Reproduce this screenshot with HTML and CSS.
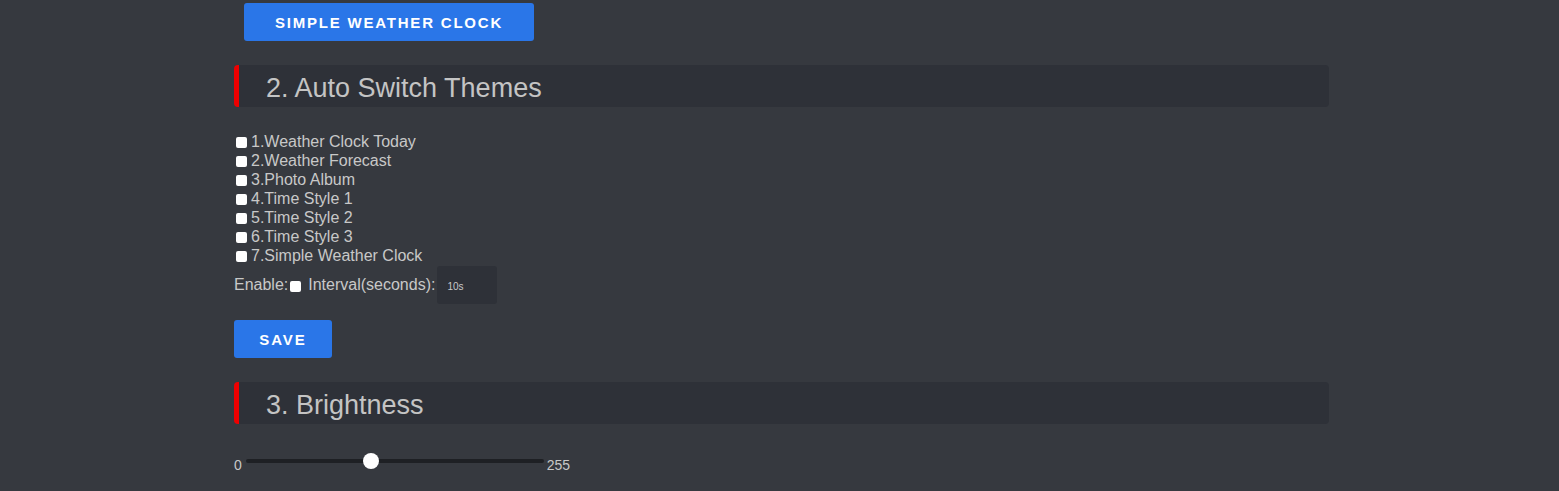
FILE: index.html
```html
<!DOCTYPE html>
<html>
<head>
<meta charset="utf-8">
<link rel="stylesheet" href="styles.css">
</head>
<body>
<div class="page">
  <div class="theme-btn-row">
    <button class="btn btn-wide">Simple Weather Clock</button>
  </div>

  <h2 class="section-title">2. Auto Switch Themes</h2>

  <div class="theme-list">
    <label class="item"><input type="checkbox" class="cb">1.Weather Clock Today</label>
    <label class="item"><input type="checkbox" class="cb">2.Weather Forecast</label>
    <label class="item"><input type="checkbox" class="cb">3.Photo Album</label>
    <label class="item"><input type="checkbox" class="cb">4.Time Style 1</label>
    <label class="item"><input type="checkbox" class="cb">5.Time Style 2</label>
    <label class="item"><input type="checkbox" class="cb">6.Time Style 3</label>
    <label class="item"><input type="checkbox" class="cb">7.Simple Weather Clock</label>
  </div>

  <div class="enable-row">
    <span>Enable:</span><input type="checkbox" class="cb cb-enable"><span class="interval-label">Interval(seconds):</span><input type="text" class="interval" placeholder="10s">
  </div>

  <button class="btn btn-save">Save</button>

  <h2 class="section-title">3. Brightness</h2>

  <div class="slider-row">
    <span class="lim">0</span>
    <div class="track"><div class="thumb" style="left: 117px"></div></div>
    <span class="lim">255</span>
  </div>
</div>
</body>
</html>
```

FILE: styles.css
```css
html, body {
  margin: 0;
  padding: 0;
  background: #36393f;
  height: 100%;
}
body {
  font-family: "Liberation Sans", Arial, sans-serif;
  color: #c8c8c8;
}
.page {
  width: 1095px;
  margin-left: 234px;
  display: flex;
  flex-direction: column;
  align-items: flex-start;
}
.theme-btn-row {
  padding: 3px 0 0 10px;
}
.btn {
  border: none;
  background: #2a76e8;
  color: #ffffff;
  font-family: "Liberation Sans", Arial, sans-serif;
  font-weight: bold;
  text-transform: uppercase;
  font-size: 15px;
  letter-spacing: 1.8px;
  height: 38px;
  border-radius: 3px;
  cursor: pointer;
}
.btn-wide {
  width: 290px;
}
.section-title {
  align-self: stretch;
  margin: 24px 0 0 0;
  height: 42px;
  box-sizing: border-box;
  background: #2e3138;
  border-left: 5px solid #ee0000;
  border-radius: 4px;
  padding-left: 27px;
  font-weight: normal;
  font-size: 27px;
  line-height: 46px;
  overflow: hidden;
  color: #c4c4c4;
}
.theme-list {
  margin-top: 25px;
  display: flex;
  flex-direction: column;
}
.item {
  display: flex;
  align-items: center;
  height: 19px;
  font-size: 16px;
  line-height: 19px;
}
.cb {
  appearance: none;
  -webkit-appearance: none;
  width: 11px;
  height: 11px;
  margin: 2px 4px 0 2px;
  background: #ffffff;
  border-radius: 2px;
}
.enable-row {
  margin-top: 1px;
  display: flex;
  align-items: center;
  font-size: 16px;
}
.cb-enable {
  margin: 3px 7px 0 2px;
}
.interval-label {
  margin-right: 2px;
}
.interval {
  width: 60px;
  height: 38px;
  box-sizing: border-box;
  border: none;
  background: #2e3138;
  border-radius: 3px;
  padding: 2px 0 0 10px;
  font-family: "Liberation Sans", Arial, sans-serif;
  font-size: 10px;
  color: #c8c8c8;
}
.interval::placeholder {
  color: #c8c8c8;
}
.btn-save {
  margin-top: 16px;
  width: 98px;
  letter-spacing: 2px;
}
.btn-save + .section-title {
  margin-top: 24px;
}
.slider-row {
  margin-top: 25px;
  display: flex;
  align-items: center;
  font-size: 14px;
}
.lim {
  line-height: 16px;
  padding-top: 8px;
}
.track {
  position: relative;
  width: 298px;
  height: 4px;
  margin: 0 3px 0 4px;
  background: #1e2024;
  border-radius: 2px;
}
.thumb {
  position: absolute;
  top: -6px;
  width: 16px;
  height: 16px;
  border-radius: 50%;
  background: #ffffff;
}
```
